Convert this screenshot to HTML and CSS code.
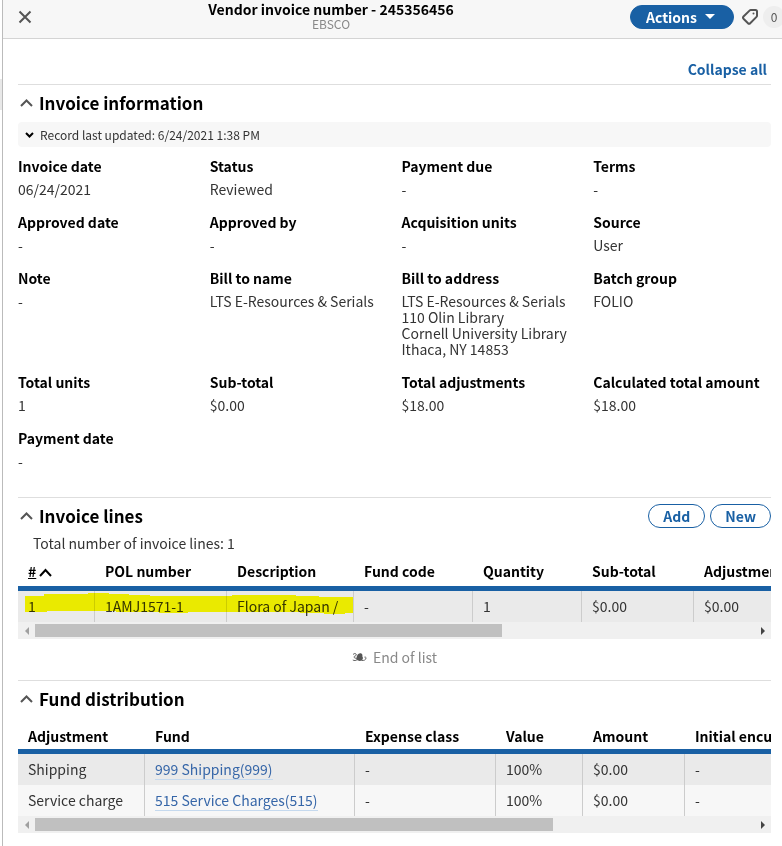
FILE: index.html
```html
<!DOCTYPE html>
<html lang="en">
<head>
    <meta charset="utf-8">
    <title>Vendor invoice number - 245356456</title>
    <link rel="stylesheet" href="styles.css">
</head>
<body>
    <div class="edge"><span class="edge-row"></span></div>
    <main class="pane">
        <header class="pane-header">
            <button class="icon-button close" aria-label="Close">
                <svg width="14" height="14" viewBox="0 0 14 14"><path d="M1.500 1.500l11 11M12.500 1.500l-11 11" /></svg>
            </button>
            <div class="pane-title">
                <h1>Vendor invoice number - 245356456</h1>
                <p>EBSCO</p>
            </div>
            <div class="pane-menu">
                <button class="button primary">Actions
                    <svg width="10" height="5" viewBox="0 0 10 5"><path d="M0 0h10l-5 5z" /></svg>
                </button>
                <button class="icon-button tags" aria-label="Tags">
                    <svg width="16" height="16" viewBox="0 0 16 16">
                        <path d="M8.800 1h4.700q1.500 0 1.500 1.500v4.200q0 .7-.5 1.200l-6.300 6.300q-1.100 1.100-2.200 0L1.500 9.700q-1-1.100 0-2.200l6-5.900q.6-.6 1.300-.6z" />
                        <circle cx="11.500" cy="4.600" r="1" />
                    </svg>
                </button>
                <span class="badge">0</span>
            </div>
        </header>

        <div class="content">
            <div class="toolbar">
                <button class="link-button">Collapse all</button>
            </div>

            <section class="accordion info">
                <div class="accordion-header">
                    <h2><button class="toggle"><svg width="13" height="8" viewBox="0 0 13 8"><path d="M1 7l5.500-5.500L12 7" /></svg>Invoice information</button></h2>
                </div>
                <button class="meta">
                    <svg width="9" height="6" viewBox="0 0 9 6"><path d="M1 1l3.500 3.500L8 1" /></svg>
                    Record last updated: 6/24/2021 1:38 PM
                </button>
                <dl class="fields">
                    <div><dt>Invoice date</dt><dd>06/24/2021</dd></div>
                    <div><dt>Status</dt><dd>Reviewed</dd></div>
                    <div><dt>Payment due</dt><dd>-</dd></div>
                    <div><dt>Terms</dt><dd>-</dd></div>
                    <div><dt>Approved date</dt><dd>-</dd></div>
                    <div><dt>Approved by</dt><dd>-</dd></div>
                    <div><dt>Acquisition units</dt><dd>-</dd></div>
                    <div><dt>Source</dt><dd>User</dd></div>
                    <div><dt>Note</dt><dd>-</dd></div>
                    <div><dt>Bill to name</dt><dd>LTS E-Resources &amp; Serials</dd></div>
                    <div><dt>Bill to address</dt><dd>LTS E-Resources &amp; Serials<br>110 Olin Library<br>Cornell University Library<br>Ithaca, NY 14853</dd></div>
                    <div><dt>Batch group</dt><dd>FOLIO</dd></div>
                    <div><dt>Total units</dt><dd>1</dd></div>
                    <div><dt>Sub-total</dt><dd>$0.00</dd></div>
                    <div><dt>Total adjustments</dt><dd>$18.00</dd></div>
                    <div><dt>Calculated total amount</dt><dd>$18.00</dd></div>
                    <div><dt>Payment date</dt><dd>-</dd></div>
                </dl>
            </section>

            <section class="accordion lines">
                <div class="accordion-header">
                    <h2><button class="toggle"><svg width="13" height="8" viewBox="0 0 13 8"><path d="M1 7l5.500-5.500L12 7" /></svg>Invoice lines</button></h2>
                    <div class="actions">
                        <button class="button">Add</button>
                        <button class="button">New</button>
                    </div>
                </div>
                <p class="total">Total number of invoice lines: 1</p>
                <div class="list">
                    <table class="lines-table">
                        <colgroup>
                            <col class="number"><col class="pol"><col class="description"><col class="code"><col class="quantity"><col class="subtotal"><col>
                        </colgroup>
                        <thead>
                            <tr>
                                <th><span class="sorted">#</span> <svg class="sort" width="13" height="9" viewBox="0 0 13 9"><path d="M1 8l5.500-6L12 8" /></svg></th>
                                <th>POL number</th>
                                <th>Description</th>
                                <th>Fund code</th>
                                <th>Quantity</th>
                                <th>Sub-total</th>
                                <th>Adjustments</th>
                            </tr>
                        </thead>
                        <tbody>
                            <tr>
                                <td>1</td>
                                <td>1AMJ1571-1</td>
                                <td>Flora of Japan /</td>
                                <td>-</td>
                                <td>1</td>
                                <td>$0.00</td>
                                <td>$0.00</td>
                            </tr>
                        </tbody>
                    </table>
                    <svg class="marker" width="328" height="22" viewBox="0 0 328 22">
                        <path d="M0 4h19V2h44V1h21v1h20v1h21v1h82v-1h64v1h23v1h34v16h-8v1h-21v-1h-24v-1h-112v1h-29v-1h-43v-1H22v1H0z" />
                    </svg>
                </div>
                <div class="scrollbar">
                    <span class="arrow left"></span>
                    <div class="track"><div class="thumb" style="width: 65%"></div></div>
                    <span class="arrow right"></span>
                </div>
                <p class="end">
                    <svg width="15" height="10" viewBox="0 0 15 10">
                        <path class="leaf" d="M5 4C5.600 2 7.300 1 8.800 1.300c1.600.3 1.900 1.700 1.500 3 1 1.200.8 3-.3 3.900-1.300 1-3.700.9-5.200-.1C4.200 7 4.400 5.300 5 4z" />
                        <path class="stem" d="M1 2.500C2.500.8 4.500 1.500 4.300 3 4 4.300 2 3.800 2 5s2 1.200 3 1.500M.8 8c1.500.8 3 .8 4.500-.5M9.500 8.500c2.500.3 4.500-.7 4.500-2.500 0-1-1-1.300-1.600-.8" />
                    </svg>
                    End of list
                </p>
            </section>

            <section class="accordion funds">
                <div class="accordion-header">
                    <h2><button class="toggle"><svg width="13" height="8" viewBox="0 0 13 8"><path d="M1 7l5.500-5.500L12 7" /></svg>Fund distribution</button></h2>
                </div>
                <div class="list">
                    <table class="funds-table">
                        <colgroup>
                            <col class="adjustment"><col class="fund"><col class="expense"><col class="value"><col class="amount"><col>
                        </colgroup>
                        <thead>
                            <tr>
                                <th>Adjustment</th>
                                <th>Fund</th>
                                <th>Expense class</th>
                                <th>Value</th>
                                <th>Amount</th>
                                <th>Initial encumbrance</th>
                            </tr>
                        </thead>
                        <tbody>
                            <tr>
                                <td>Shipping</td>
                                <td><a href="#">999 Shipping(999)</a></td>
                                <td>-</td>
                                <td>100%</td>
                                <td>$0.00</td>
                                <td>-</td>
                            </tr>
                            <tr>
                                <td>Service charge</td>
                                <td><a href="#">515 Service Charges(515)</a></td>
                                <td>-</td>
                                <td>100%</td>
                                <td>$0.00</td>
                                <td>-</td>
                            </tr>
                        </tbody>
                    </table>
                </div>
                <div class="scrollbar">
                    <span class="arrow left"></span>
                    <div class="track"><div class="thumb" style="width: 72%"></div></div>
                    <span class="arrow right"></span>
                </div>
            </section>
        </div>
    </main>
</body>
</html>
```

FILE: styles.css
```css
* {
    box-sizing: border-box;
}
body {
    margin: 0;
    display: flex;
    min-height: 100vh;
    overflow-x: hidden;
    background-color: #fff;
    color: #333;
    font-family: "Noto Sans CJK SC", "Open Sans", sans-serif;
    font-size: 14px;
    line-height: 16px;
}
h1, h2, p, dl, dd {
    margin: 0;
}
button {
    padding: 0;
    border: none;
    background: none;
    color: inherit;
    font: inherit;
    cursor: pointer;
}
svg {
    flex: none;
    fill: none;
}

/* sliver of the neighbouring pane */
.edge {
    width: 2px;
    padding-top: 79px;
}
.edge-row {
    display: block;
    height: 31px;
    background-color: #e8e8e8;
}
.pane {
    flex: 1;
    min-width: 0;
    border-left: 1px solid #bbb;
}

.pane-header {
    display: flex;
    align-items: center;
    height: 39px;
    overflow: hidden;
    background-color: #f7f7f7;
    border-bottom: 1px solid #d4d4d4;
}
.icon-button {
    display: flex;
}
.icon-button path, .icon-button circle {
    stroke: #555;
    stroke-width: 2;
}
.icon-button circle {
    fill: #555;
    stroke: none;
}
.close {
    margin: 0 0 4px 15px;
}
.pane-title {
    flex: 1;
    padding-bottom: 8px;
    text-align: center;
}
.pane-title h1 {
    color: #000;
    font-size: 14px;
    line-height: 16px;
}
.pane-title p {
    color: #888;
    font-size: 12px;
    line-height: 13px;
}
.pane-menu {
    display: flex;
    align-items: center;
    gap: 8px;
    padding-bottom: 5px;
    margin-right: -3px;
}
.badge {
    width: 22px;
    margin-left: -3px;
    border-radius: 11px;
    background-color: #eee;
    color: #555;
    font-size: 12px;
    line-height: 22px;
    text-align: center;
}

.button {
    height: 24px;
    padding: 0 14px;
    border: 1px solid #1960a4;
    border-radius: 12px;
    color: #1960a4;
    font-weight: bold;
    line-height: 22px;
}
.primary {
    display: flex;
    align-items: center;
    gap: 8px;
    padding: 0 18px 0 15px;
    background-color: #1960a4;
    color: #fff;
}
.primary path {
    fill: #fff;
}

.content {
    padding: 0 11px 13px 15px;
}
.toolbar {
    display: flex;
    justify-content: flex-end;
    align-items: center;
    height: 45px;
    padding: 15px 4px 0 0;
}
.link-button {
    color: #1960a4;
    font-weight: bold;
}

.accordion {
    border-top: 1px solid #dedede;
}
.accordion-header {
    display: flex;
    justify-content: space-between;
    align-items: center;
    height: 37px;
    padding-bottom: 2px;
}
h2 {
    color: #000;
    font-size: 17px;
    line-height: 20px;
}
.toggle {
    display: flex;
    align-items: center;
    gap: 6px;
    padding-left: 2px;
}
.toggle path {
    stroke: #555;
    stroke-width: 2;
}
.actions {
    display: flex;
    gap: 5px;
}

.meta {
    display: flex;
    align-items: center;
    gap: 6px;
    width: 100%;
    height: 25px;
    padding: 0 7px;
    border-radius: 4px;
    background-color: #f7f7f7;
    font-size: 12px;
}
.meta path {
    stroke: #000;
    stroke-width: 2;
}

.fields {
    display: grid;
    grid-template-columns: repeat(4, 1fr);
    gap: 17px 0;
    padding: 11px 0 28px;
    margin-right: -14px;
}
dt {
    margin-bottom: 7px;
    color: #000;
    font-weight: bold;
}

.total {
    padding-left: 15px;
}
.list {
    position: relative;
    overflow: hidden;
}
table {
    border-collapse: separate;
    border-spacing: 0;
    table-layout: fixed;
}
.lines-table {
    width: 154%;
}
.funds-table {
    width: 139%;
}
th, td {
    padding: 0 10px;
    text-align: left;
    white-space: nowrap;
}
th {
    height: 36px;
    padding-top: 4px;
    border-bottom: 5px solid #1960a4;
    color: #000;
}
.lines-table th {
    height: 40px;
}
td {
    height: 31px;
    padding-bottom: 2px;
    border-right: 1px solid #ccc;
    background-color: #eaeaea;
}
tbody tr:nth-child(2) td {
    background-color: #f7f7f7;
}
.number { width: 77px; }
.pol { width: 132px; }
.description { width: 127px; }
.code { width: 119px; }
.quantity { width: 109px; }
.subtotal { width: 112px; }
.adjustment { width: 127px; }
.fund { width: 210px; }
.expense { width: 141px; }
.value { width: 87px; }
.amount { width: 102px; }

.sorted {
    text-decoration: underline;
}
.sort path {
    stroke: #000;
    stroke-width: 2;
}
a {
    border-bottom: 1px solid #c5d9ee;
    color: #3666a8;
    text-decoration: none;
}
/* highlighter stroke over the first cells */
.marker {
    position: absolute;
    left: 7px;
    bottom: 8px;
    fill: #ff0;
    mix-blend-mode: multiply;
    pointer-events: none;
}

.scrollbar {
    display: flex;
    align-items: center;
    height: 17px;
    background-color: #f0f0f0;
}
.track {
    flex: 1;
}
.thumb {
    height: 13px;
    background-color: #c0c0c0;
}
.arrow {
    width: 17px;
}
.arrow::before {
    content: "";
    display: block;
    width: 0;
    margin: 0 auto;
    border: 4px solid transparent;
}
.left::before {
    border-left: none;
    border-right-color: #a0a0a0;
}
.right::before {
    border-right: none;
    border-left-color: #444;
}
.end {
    display: flex;
    align-items: center;
    justify-content: center;
    gap: 6px;
    height: 41px;
    padding-bottom: 6px;
    color: #888;
}
.leaf {
    fill: #555;
}
.stem {
    stroke: #666;
}
```
